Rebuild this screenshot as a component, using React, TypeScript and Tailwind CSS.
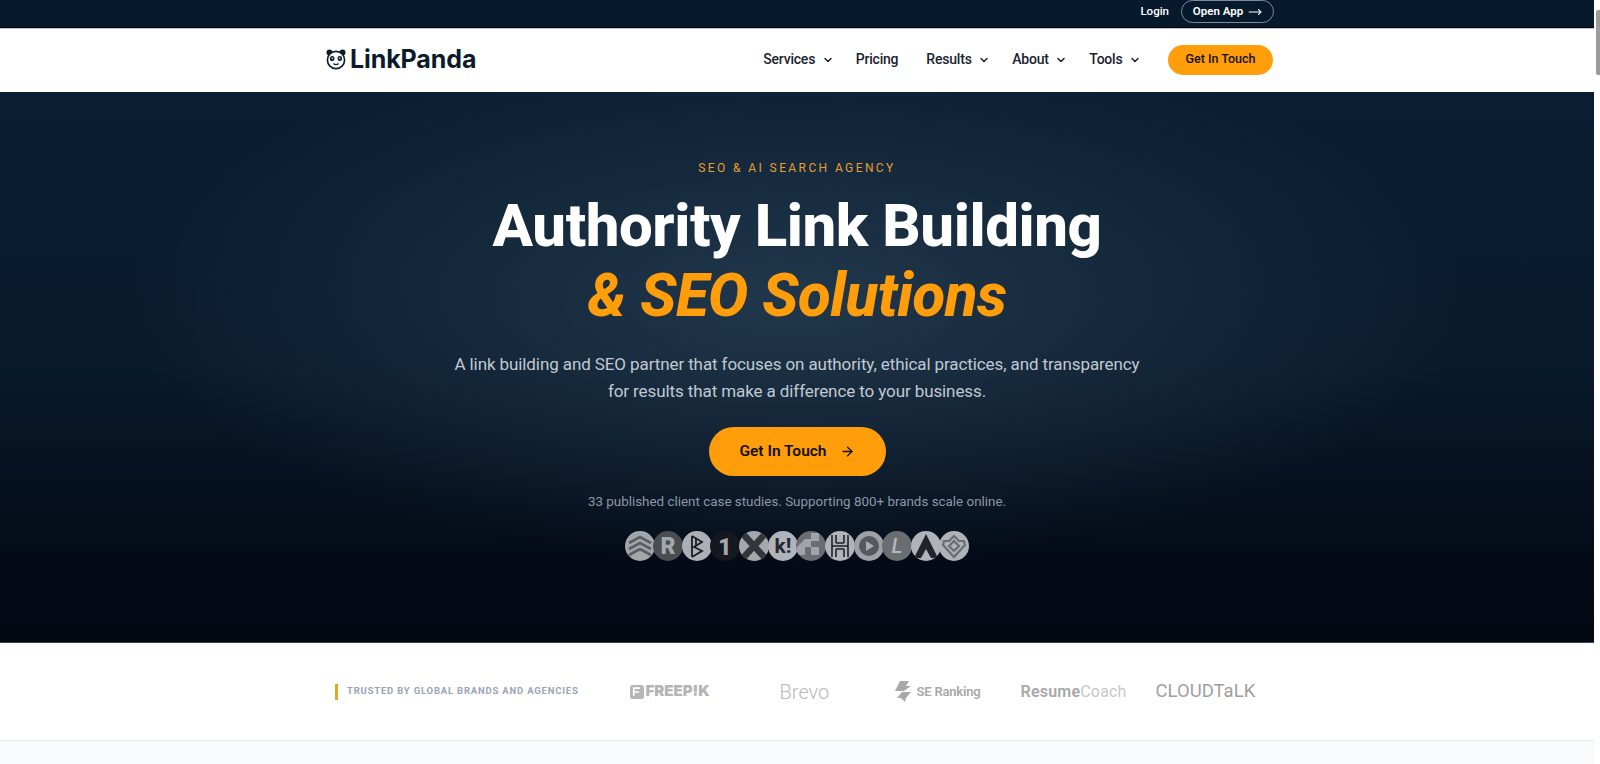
import { ChevronDown, ArrowRight, MoveRight } from "lucide-react";

const navItems = [
  { label: "Services", menu: true },
  { label: "Pricing", menu: false },
  { label: "Results", menu: true },
  { label: "About", menu: true },
  { label: "Tools", menu: true },
];

function PandaLogo() {
  return (
    <svg width="20" height="21" viewBox="0 0 20 21">
      <circle cx="3.5" cy="3.5" r="3" fill="#0b1b2b" />
      <circle cx="16.5" cy="3.5" r="3" fill="#0b1b2b" />
      <circle cx="10" cy="11" r="8.6" fill="#fff" stroke="#0b1b2b" strokeWidth="1.6" />
      <ellipse cx="6.2" cy="9.5" rx="2.3" ry="2.6" fill="#0b1b2b" />
      <ellipse cx="13.8" cy="9.5" rx="2.3" ry="2.6" fill="#0b1b2b" />
      <circle cx="6.4" cy="9.2" r="0.8" fill="#fff" />
      <circle cx="13.6" cy="9.2" r="0.8" fill="#fff" />
      <path d="M7.5 14.5 Q10 16.8 12.5 14.5" fill="none" stroke="#0b1b2b" strokeWidth="1.3" />
    </svg>
  );
}

// little greyscale client badges under the hero
const badges = [
  { bg: "bg-[#a3a6ab]", el: <path d="M4 12l11-6 11 6M4 18l11-6 11 6M4 24l11-6 11 6" fill="none" stroke="#5b5e63" strokeWidth="2.6" /> },
  { bg: "bg-[#4a4d52]", el: <text x="15" y="23" textAnchor="middle" fontSize="23" fontWeight="900" fill="#a4a7ad" fontFamily="Roboto, sans-serif">R</text> },
  { bg: "bg-[#acafb5]", el: <path d="M10 5l10 6-8 5 8 4-10 6M10 5v21M14 8v6" fill="none" stroke="#1b1d21" strokeWidth="1.8" /> },
  { bg: "bg-[#15181c]", el: <text x="15" y="24" textAnchor="middle" fontSize="23" fontWeight="900" fill="#a4a7ad" fontFamily="Roboto, sans-serif">1</text> },
  { bg: "bg-[#a4a7ac]", el: <path d="M4 3l22 24M26 3L4 27" stroke="#33363b" strokeWidth="6.5" /> },
  { bg: "bg-[#b0b3b9]", el: <text x="15" y="22" textAnchor="middle" fontSize="21" fontWeight="700" fill="#24272b" fontFamily="Roboto, sans-serif">k!</text> },
  { bg: "bg-[#6a6d72]", el: <path d="M0 17l9-9h6V2h8v8h-8v6H9v8H2zM15 16h8v8h-8z" fill="#a0a3a8" /> },
  { bg: "bg-[#b0b3b9]", el: <path d="M7 4v22M23 4v22M7 15h16M11 4v8M19 4v8M11 18v8M19 18v8M11 12h8M11 18h8" fill="none" stroke="#1f2226" strokeWidth="1.6" /> },
  { bg: "bg-[#9ea1a6]", el: <><circle cx="15" cy="15" r="10" fill="#55585d" /><path d="M12 10l8 5-8 5z" fill="#a9acb2" /></> },
  { bg: "bg-[#6a6d72]", el: <text x="15" y="22" textAnchor="middle" fontSize="21" fontStyle="italic" fontWeight="500" fill="#b4b7bc" fontFamily="Roboto, sans-serif">L</text> },
  { bg: "bg-[#b0b3b9]", el: <path d="M15 3l12 24h-7l-5-9-5 9H3z" fill="#202327" /> },
  { bg: "bg-[#afb2b8]", el: <path d="M15 5l5 5 5 0 1 4-11 12L4 14l1-4 5 0zM15 10l-5 5 5 5 5-5z" fill="none" stroke="#6a6d72" strokeWidth="2.2" /> },
];

export default function App() {
  return (
    <div className="flex h-[764px] overflow-hidden bg-white font-['Roboto',sans-serif]">
      <div className="w-[1594px] shrink-0">
        <div className="flex h-[29px] items-center justify-end border-b border-b-[#b9c7d6] bg-[#071a2d] pb-[5px] pr-[320px] shadow-[inset_0_-1px_0_#000]">
          <a className="mr-[12px] text-[11.5px] font-medium text-white">Login</a>
          <a className="flex h-[23px] w-[93px] items-center justify-center gap-[5px] rounded-full border border-[#7d8a98] text-[11.5px] font-semibold text-white">
            Open App
            <MoveRight size={14} />
          </a>
        </div>

        <nav className="flex h-[63px] items-center justify-between pb-[2px] pl-[326px] pr-[321px]">
          <div className="flex items-center gap-[4px]">
            <PandaLogo />
            <span className="font-['Inter',sans-serif] text-[25px] font-bold tracking-[-0.1px] text-[#0b1b2b]">LinkPanda</span>
          </div>
          <div className="flex items-center">
            {navItems.map((item) => (
              <a
                key={item.label}
                className={`flex items-center gap-[6.5px] text-[14px] font-medium tracking-[-0.2px] text-[#1a2330] ${item.menu ? "mr-[22px]" : "mr-[28px]"}`}
              >
                {item.label}
                {item.menu && <ChevronDown size={12} strokeWidth={3} />}
              </a>
            ))}
            <a className="ml-[5px] flex h-[30px] w-[105px] items-center justify-center rounded-full bg-[#ff9d0a] text-[12.5px] font-medium text-[#111]">
              Get In Touch
            </a>
          </div>
        </nav>

        <section className="flex h-[551px] flex-col items-center border-b border-b-[#3b4350] bg-[radial-gradient(ellipse_42%_48%_at_50%_38%,rgba(42,66,86,0.72)_0%,transparent_100%),linear-gradient(180deg,#0a1d32_0%,#091a2c_50%,#040b17_85%,#030913_100%)] pt-[67px]">
          <p className="text-[12px] font-normal tracking-[2.4px] text-[#e89f2a]">SEO &amp; AI SEARCH AGENCY</p>
          <h1 className="mt-[14px] text-center text-[60px] font-extrabold leading-[70px] tracking-[-0.45px] text-white">
            Authority Link Building
            <br />
            <em className="text-[#ff9d0a]">&amp; SEO Solutions</em>
          </h1>
          <p className="mt-[20px] text-center text-[17px] leading-[27px] tracking-[-0.1px] text-[#c0c8d2]">
            A link building and SEO partner that focuses on authority, ethical practices, and transparency
            <br />
            for results that make a difference to your business.
          </p>
          <a className="mt-[22px] flex h-[49px] w-[177px] items-center justify-center gap-[13px] rounded-full bg-[#ff9d0a] text-[15.5px] font-semibold text-[#111]">
            Get In Touch
            <ArrowRight size={15} strokeWidth={2.2} />
          </a>
          <p className="mt-[16px] text-[13.4px] text-[#8b97a6]">33 published client case studies. Supporting 800+ brands scale online.</p>
          <div className="mt-[19px] flex">
            {badges.map((b, i) => (
              <div key={i} className={`-ml-[1.4px] h-[30px] w-[30px] overflow-hidden rounded-full first:ml-0 ${b.bg}`}>
                <svg viewBox="0 0 30 30" width="30" height="30">{b.el}</svg>
              </div>
            ))}
          </div>
        </section>

        <section className="flex h-[98px] items-center border-b border-b-[#e5e7eb] pl-[335px]">
          <div className="h-[16px] w-[3px] bg-[#e8a525]" />
          <span className="ml-[9px] text-[9.5px] font-bold tracking-[0.8px] text-[#9aa3b5]">TRUSTED BY GLOBAL BRANDS AND AGENCIES</span>
          <div className="ml-[51px] flex items-center">
            <span className="flex w-[82px] items-center gap-[2px] font-['Inter',sans-serif] text-[15px] font-black text-[#b5b5b5]">
              <svg width="14" height="14" viewBox="0 0 13 13"><rect width="13" height="13" rx="2.5" fill="#b5b5b5" /><path d="M3.5 10V3h6M3.5 6.5h5" stroke="#fff" strokeWidth="1.6" fill="none" /></svg>
              FREEP!K
            </span>
            <span className="ml-[68px] w-[49px] text-[20px] font-light text-[#b8b8b8]">Brevo</span>
            <span className="ml-[65px] flex w-[88px] items-center gap-[5px] whitespace-nowrap text-[13px] font-semibold tracking-[-0.2px] text-[#a8a8a8]">
              <svg width="18" height="21" viewBox="0 0 18 21"><path d="M6 0h9l-3 5h5L10 10H1zM8 11h9l-5 6-1 4-4-4H3z" fill="#a8a8a8" /></svg>
              SE Ranking
            </span>
            <span className="ml-[39px] w-[102px] text-[16px] font-semibold tracking-[0.2px] text-[#a8a8a8]">Resume<span className="font-normal text-[#c8c8c8]">Coach</span></span>
            <span className="ml-[33px] text-[18.5px] text-[#a0a0a0]">CLOUDTaLK</span>
          </div>
        </section>

        <div className="h-full bg-[#f8fafc]" />
      </div>
      <div className="w-[6px] pl-[2px] pt-[10px]">
        <div className="h-[65px] w-[4px] rounded-l-[2px] bg-[#9b9b9b]" />
      </div>
    </div>
  );
}
